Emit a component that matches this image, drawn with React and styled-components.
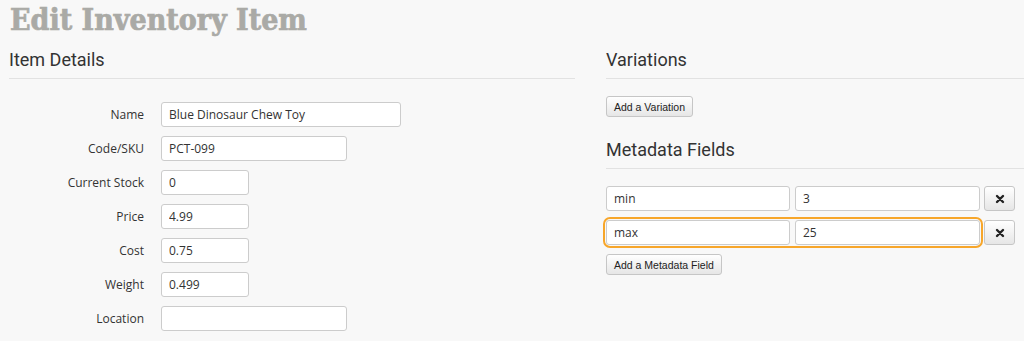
import React from "react";
import styled, { createGlobalStyle } from "styled-components";

const GlobalStyle = createGlobalStyle`
    html, body {
        margin: 0;
        padding: 0;
        background: #f8f8f8;
    }
    body {
        font-family: "Open Sans", "Liberation Sans", sans-serif;
        color: #333;
        overflow: hidden;
    }
`

const Page = styled.div`
    padding: 0 0 0 9px;
    width: 1024px;
    box-sizing: border-box;
`

const Title = styled.h1`
    margin: 5px 0 0 1px;
    font-family: "DejaVu Serif", "Liberation Serif", serif;
    font-stretch: condensed;
    font-weight: bold;
    font-size: 30px;
    line-height: 30px;
    color: #aaaaa6;
    -webkit-text-stroke: 0.7px #aaaaa6;
    white-space: nowrap;
`

const Columns = styled.div`
    display: grid;
    grid-template-columns: 566px 1fr;
    column-gap: 31px;
    margin-top: 14px;
`

const Column = styled.section`
    display: flex;
    flex-direction: column;
`

const SectionTitle = styled.h2`
    margin: ${(p) => p.$top || 0}px 0 0 0;
    padding-bottom: 7px;
    border-bottom: 1px solid #e2e2e2;
    font-family: Roboto, "Liberation Sans", sans-serif;
    font-weight: normal;
    font-size: 18px;
    line-height: 22px;
    color: #333;
`

const Form = styled.div`
    display: grid;
    grid-template-columns: 135px auto;
    column-gap: 17px;
    row-gap: 9px;
    margin-top: 23px;
    align-items: center;
    justify-items: start;
`

const Label = styled.label`
    justify-self: end;
    font-size: 12px;
    color: #333;
`

const Input = styled.input`
    box-sizing: border-box;
    width: ${(p) => p.$w}px;
    height: 25px;
    padding: 0 7px;
    border: 1px solid #ccc;
    border-radius: 3px;
    background: #fff;
    font-family: "Open Sans", "Liberation Sans", sans-serif;
    font-size: 12px;
    color: #333;
    outline: none;
`

const Button = styled.button`
    box-sizing: border-box;
    height: 21px;
    padding: 0 7px;
    border: 1px solid #c6c6c6;
    border-radius: 3px;
    background: linear-gradient(#ffffff, #e6e6e6);
    font-family: "Liberation Sans", Arial, sans-serif;
    font-size: 10.5px;
    color: #222;
    cursor: pointer;
    align-self: flex-start;
    margin-top: ${(p) => p.$top || 0}px;
`

const IconButton = styled(Button)`
    width: 31px;
    height: 25px;
    padding: 0;
    display: flex;
    align-items: center;
    justify-content: center;
`

const MetaList = styled.div`
    display: flex;
    flex-direction: column;
    gap: 9px;
    margin-top: 17px;
`

const MetaRow = styled.div`
    display: flex;
    align-items: center;
    gap: 4px;
`

const Pair = styled.div`
    display: flex;
    gap: 5px;
    border-radius: 4px;
    outline: ${(p) => (p.$focused ? "2px solid #f7a62a" : "none")};
    outline-offset: 1px;
`

function CloseIcon() {
    return (
        <svg width="10" height="10" viewBox="0 0 10 10">
            <path d="M2 2 L8 8 M8 2 L2 8" stroke="#222" strokeWidth="2.4" strokeLinecap="round" />
        </svg>
    );
}

const details = [
    { label: "Name", value: "Blue Dinosaur Chew Toy", w: 240 },
    { label: "Code/SKU", value: "PCT-099", w: 186 },
    { label: "Current Stock", value: "0", w: 88 },
    { label: "Price", value: "4.99", w: 88 },
    { label: "Cost", value: "0.75", w: 88 },
    { label: "Weight", value: "0.499", w: 88 },
    { label: "Location", value: "", w: 186 },
];

const metadata = [
    { key: "min", value: "3" },
    { key: "max", value: "25", focused: true },
];

function App() {
    return (
        <Page>
            <GlobalStyle />
            <Title>Edit Inventory Item</Title>
            <Columns>
                <Column>
                    <SectionTitle>Item Details</SectionTitle>
                    <Form>
                        {details.map((d) => (
                            <React.Fragment key={d.label}>
                                <Label>{d.label}</Label>
                                <Input $w={d.w} defaultValue={d.value} />
                            </React.Fragment>
                        ))}
                    </Form>
                </Column>
                <Column>
                    <SectionTitle>Variations</SectionTitle>
                    <Button $top={17}>Add a Variation</Button>
                    <SectionTitle $top={22}>Metadata Fields</SectionTitle>
                    <MetaList>
                        {metadata.map((m) => (
                            <MetaRow key={m.key}>
                                <Pair $focused={m.focused}>
                                    <Input $w={184} defaultValue={m.key} />
                                    <Input $w={185} defaultValue={m.value} />
                                </Pair>
                                <IconButton><CloseIcon /></IconButton>
                            </MetaRow>
                        ))}
                        <Button>Add a Metadata Field</Button>
                    </MetaList>
                </Column>
            </Columns>
        </Page>
    );
}

export default App;
